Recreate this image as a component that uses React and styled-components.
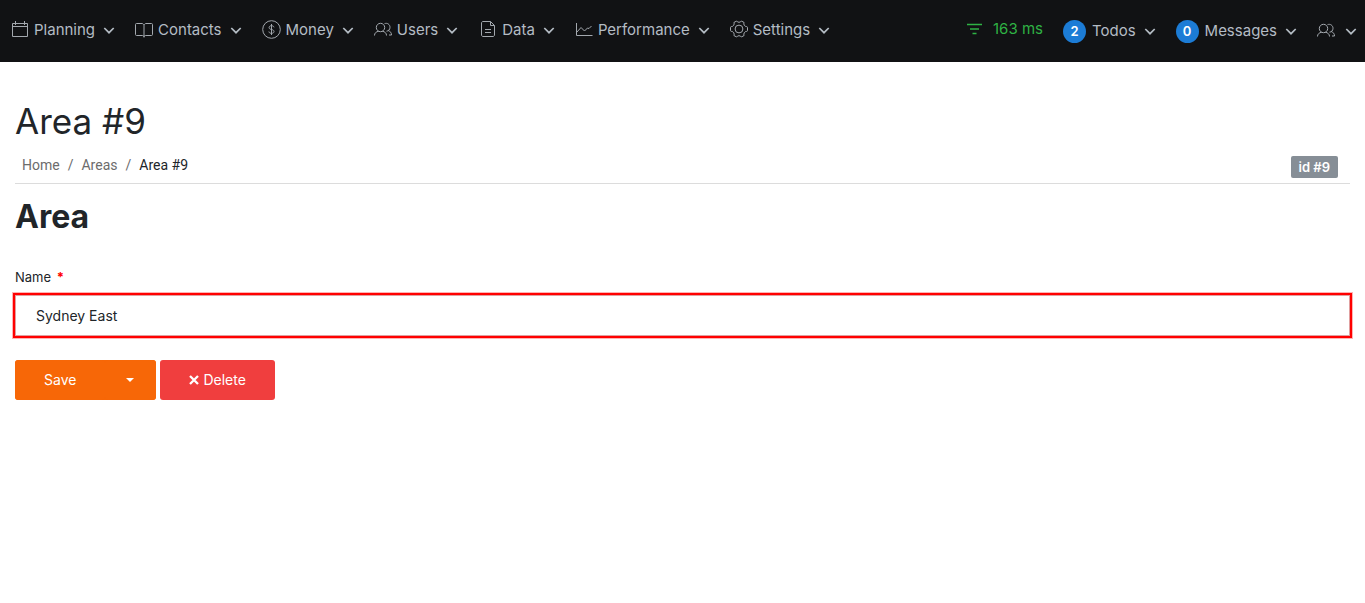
import React from 'react';
import styled, { createGlobalStyle } from 'styled-components';

const GlobalStyle = createGlobalStyle`
  * {
    box-sizing: border-box;
  }

  body {
    margin: 0;
    background: #fff;
    color: #212529;
    font-family: Inter, 'Liberation Sans', sans-serif;
    font-size: 14px;
  }
`;

const CalendarIcon = () => (
  <Icon width="17" height="20" viewBox="0 0 17 20">
    <path d="M.5 3.500h15v13H.5zM.5 6.500h15M3.500 1v4M12.500 1v4" />
  </Icon>
);

const BookIcon = () => (
  <Icon width="18" height="18" viewBox="0 0 18 18">
    <path d="M9 4C8.500 3 7.800 2.500 7 2.500H1.500c-.6 0-1 .4-1 1v10c0 .6.4 1 1 1h6c.8 0 1.300.4 1.500 1.200.2-.8.7-1.200 1.500-1.200h6c.6 0 1-.4 1-1v-10c0-.6-.4-1-1-1H11c-.8 0-1.500.5-2 1.500zM9 4v12.500" />
  </Icon>
);

const DollarIcon = () => (
  <Icon width="19" height="20" viewBox="0 0 19 20">
    <circle cx="9.500" cy="9.500" r="8.800" />
    <path d="M12 7.300c-.2-1-1.200-1.600-2.500-1.600s-2.400.6-2.400 1.800 1 1.700 2.400 2 2.500.8 2.500 2-1.100 1.800-2.500 1.800-2.500-.6-2.600-1.800M9.500 4v11" />
  </Icon>
);

const UsersIcon = () => (
  <Icon width="18" height="18" viewBox="0 0 18 18">
    <circle cx="6.500" cy="6.500" r="4.200" />
    <path d="M.5 14.500c0-2.400 1.600-3.800 4.200-4.300M8.300 10.200c2.600.5 4.200 1.900 4.200 4.300M10.500 2.700c2.800-1.200 5.500.8 5.500 3.600 0 2.200-1.400 3.700-3.500 3.900M14.500 9.800c1.900.6 3 1.900 3 4.200h-2.500" />
  </Icon>
);

const FileIcon = () => (
  <Icon width="19" height="20" viewBox="-3 0 19 20">
    <path d="M2 1.500h7.500l4 4V15c0 .8-.7 1.500-1.500 1.500H2c-.8 0-1.500-.7-1.500-1.500V3c0-.8.7-1.500 1.500-1.500zM9.500 1.500v4h4M4 9.500h6M4 12.500h6" />
  </Icon>
);

const ChartIcon = () => (
  <Icon width="18" height="18" viewBox="-1 0 18 18">
    <path d="M.5 2v12.500h16M1 11l4-4.500 3.500 3.500 3-3 1.500.5 2.500-2.500" />
  </Icon>
);

const GearIcon = () => (
  <Icon width="18" height="20" viewBox="0 0 18 20">
    <circle cx="9" cy="9" r="3.900" />
    <path d="M6.600 1c.7 1.700 4.100 1.700 4.800 0l2.700 1.500c-1 1.700.6 4.300 2.600 4.100.5 0 .8.500.8 1v2.800c0 .5-.3 1-.8 1-2-.2-3.600 2.400-2.600 4.100L11.400 17c-.7-1.700-4.100-1.700-4.800 0l-2.700-1.500c1-1.700-.6-4.300-2.600-4.100-.5 0-.8-.5-.8-1V7.600c0-.5.3-1 .8-1 2 .2 3.600-2.400 2.600-4.100z" />
  </Icon>
);

const Chevron = () => (
  <ChevronSvg width="12" height="12" viewBox="0 0 12 12">
    <path d="M1.300 4l4.700 4.700L10.700 4" />
  </ChevronSvg>
);

const menu = [
  { label: 'Planning', icon: <CalendarIcon /> },
  { label: 'Contacts', icon: <BookIcon /> },
  { label: 'Money', icon: <DollarIcon /> },
  { label: 'Users', icon: <UsersIcon /> },
  { label: 'Data', icon: <FileIcon /> },
  { label: 'Performance', icon: <ChartIcon /> },
  { label: 'Settings', icon: <GearIcon /> },
];

const App = () => (
  <>
    <GlobalStyle />
    <Header>
      <Menu aria-label="Main">
        {menu.map(({ label, icon }) => (
          <MenuButton key={label} type="button">
            {icon}
            {label}
            <Chevron />
          </MenuButton>
        ))}
      </Menu>
      <AccountMenu aria-label="Account">
        <Timing href="#timing">
          <svg width="15" height="14" viewBox="0 0 15 14" fill="none" stroke="currentColor" strokeWidth="1.300">
            <path d="M0 2.500h15M3 7h9M5.500 11.500h4" />
          </svg>
          163 ms
        </Timing>
        <MenuButton type="button">
          <Count>2</Count>
          Todos
          <Chevron />
        </MenuButton>
        <MenuButton type="button">
          <Count>0</Count>
          Messages
          <Chevron />
        </MenuButton>
        <ProfileButton type="button" aria-label="Profile">
          <UsersIcon />
          <Chevron />
        </ProfileButton>
      </AccountMenu>
    </Header>
    <Content>
      <Title>Area #9</Title>
      <TitleBar>
        <Breadcrumb aria-label="Breadcrumb">
          <a href="#home">Home</a>
          <span>/</span>
          <a href="#areas">Areas</a>
          <span>/</span>
          <strong>Area #9</strong>
        </Breadcrumb>
        <IdBadge>id #9</IdBadge>
      </TitleBar>
      <Subtitle>Area</Subtitle>
      <form>
        <Label htmlFor="name">
          Name <Required>*</Required>
        </Label>
        <Input id="name" type="text" defaultValue="Sydney East" required />
        <Actions>
          <Split>
            <Button type="button">Save</Button>
            <CaretButton type="button" aria-label="More save options">
              <svg width="8" height="4" viewBox="0 0 8 4" fill="currentColor">
                <path d="M0 0h8L4 4z" />
              </svg>
            </CaretButton>
          </Split>
          <Button type="button" $danger>
            <svg width="10" height="10" viewBox="0 0 10 10" stroke="currentColor" strokeWidth="2.300">
              <path d="M1 1l8 8M9 1L1 9" />
            </svg>
            Delete
          </Button>
        </Actions>
      </form>
    </Content>
  </>
);

const Icon = styled.svg`
  flex: none;
  fill: none;
  stroke: #a3a8ae;
  stroke-width: 1;
  margin-right: 5px;
`;

const ChevronSvg = styled.svg`
  flex: none;
  fill: none;
  stroke: currentColor;
  stroke-width: 1.7;
  margin-left: 8px;
`;

const Header = styled.header`
  display: flex;
  justify-content: space-between;
  height: 62px;
  padding: 0 8px 2px 12px;
  background: #111214;
`;

const Menu = styled.nav`
  display: flex;
  align-items: center;
  gap: 20px;
`;

const AccountMenu = styled(Menu)`
  padding-top: 2px;
`;

const MenuButton = styled.button`
  display: flex;
  align-items: center;
  height: 24px;
  padding: 0;
  border: 0;
  background: none;
  color: #b4bcc4;
  font: 400 15px/24px Inter, sans-serif;
  white-space: nowrap;
`;

const ProfileButton = styled(MenuButton)`
  > svg:first-child {
    margin-right: 2px;
  }
`;

const Timing = styled.a`
  display: flex;
  align-items: center;
  gap: 11px;
  padding-bottom: 4px;
  color: #2fb344;
  font-size: 15px;
  line-height: 24px;
  text-decoration: none;
  white-space: nowrap;
`;

const Count = styled.span`
  width: 23px;
  height: 23px;
  margin-right: 6px;
  border-radius: 50%;
  background: #1c7cd6;
  color: #fff;
  font-size: 13px;
  font-weight: 600;
  line-height: 23px;
  text-align: center;
`;

const Content = styled.main`
  padding: 37px 15px;
`;

const Title = styled.h1`
  margin: 0;
  font-size: 35px;
  font-weight: 400;
  line-height: 44px;
`;

const TitleBar = styled.div`
  display: flex;
  align-items: center;
  justify-content: space-between;
  height: 41px;
  padding: 7px 12px 0 7px;
  border-bottom: 1px solid #dcdcdc;
`;

const Breadcrumb = styled.nav`
  display: flex;
  gap: 8px;
  padding-bottom: 4px;
  color: #6c6c6c;
  font-family: Roboto, sans-serif;
  font-size: 14px;
  line-height: 20px;

  > a {
    color: inherit;
    text-decoration: none;
  }

  > strong {
    color: #212529;
    font-weight: 400;
  }
`;

const IdBadge = styled.span`
  padding: 0 8px;
  border-radius: 2px;
  background: #868e96;
  color: #fff;
  font-size: 13px;
  font-weight: 600;
  line-height: 22px;
`;

const Subtitle = styled.h2`
  margin: 12px 0 30px;
  font-size: 32px;
  font-weight: 700;
  line-height: 42px;
`;

const Label = styled.label`
  display: block;
  margin-bottom: 9px;
  font-size: 13px;
  line-height: 18px;
`;

const Required = styled.span`
  margin-left: 2px;
  color: #f00;
  font-weight: 700;
`;

const Input = styled.input`
  display: block;
  width: 100%;
  height: 41px;
  padding: 0 20px;
  border: 1px solid #e0a0a0;
  outline: 2px solid #f00;
  box-shadow: 0 0 0 3px #ffb3b3;
  color: #212529;
  font: 400 14px/20px Inter, sans-serif;
`;

const Actions = styled.div`
  display: flex;
  gap: 4px;
  margin-top: 24px;
`;

const Split = styled.div`
  display: flex;
  border-radius: 3px;
  overflow: hidden;
  background: #f76707;
`;

const Button = styled.button`
  display: flex;
  align-items: center;
  gap: 4px;
  height: 40px;
  padding: 0 29px;
  border: 0;
  border-radius: 3px;
  background: ${props => (props.$danger ? '#f03e3e' : '#f76707')};
  color: #fff;
  font: 400 14px/20px Inter, sans-serif;
`;

const CaretButton = styled(Button)`
  padding: 0 22px 0 21px;
`;

export default App;
